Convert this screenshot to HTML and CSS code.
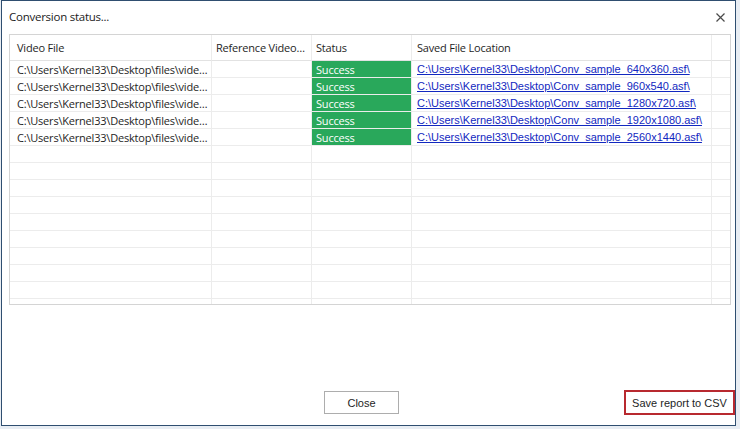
FILE: index.html
```html
<!DOCTYPE html>
<html lang="en">

<head>
    <meta charset="UTF-8">
    <title>Conversion status...</title>
    <link rel="stylesheet" href="styles.css">
</head>

<body>

    <div id="dialog">
        <div id="title-bar">
            <span id="title">Conversion status...</span>
            <span id="close-x">
                <svg width="9" height="9" viewBox="0 0 9 9">
                    <path d="M0.5 0.5 L8.5 8.5 M8.5 0.5 L0.5 8.5" stroke="#4a4a4a" stroke-width="1.2" fill="none" />
                </svg>
            </span>
        </div>

        <div id="grid">
            <div class="row header">
                <div class="cell c1">Video File</div>
                <div class="cell c2">Reference Video…</div>
                <div class="cell c3">Status</div>
                <div class="cell c4">Saved File Location</div>
                <div class="cell c5"></div>
            </div>
            <div class="row">
                <div class="cell c1">C:\Users\Kernel33\Desktop\files\vide…</div>
                <div class="cell c2"></div>
                <div class="cell c3 success">Success</div>
                <div class="cell c4"><a href="#">C:\Users\Kernel33\Desktop\Conv_sample_640x360.asf\</a></div>
                <div class="cell c5"></div>
            </div>
            <div class="row">
                <div class="cell c1">C:\Users\Kernel33\Desktop\files\vide…</div>
                <div class="cell c2"></div>
                <div class="cell c3 success">Success</div>
                <div class="cell c4"><a href="#">C:\Users\Kernel33\Desktop\Conv_sample_960x540.asf\</a></div>
                <div class="cell c5"></div>
            </div>
            <div class="row">
                <div class="cell c1">C:\Users\Kernel33\Desktop\files\vide…</div>
                <div class="cell c2"></div>
                <div class="cell c3 success">Success</div>
                <div class="cell c4"><a href="#">C:\Users\Kernel33\Desktop\Conv_sample_1280x720.asf\</a></div>
                <div class="cell c5"></div>
            </div>
            <div class="row">
                <div class="cell c1">C:\Users\Kernel33\Desktop\files\vide…</div>
                <div class="cell c2"></div>
                <div class="cell c3 success">Success</div>
                <div class="cell c4"><a href="#">C:\Users\Kernel33\Desktop\Conv_sample_1920x1080.asf\</a></div>
                <div class="cell c5"></div>
            </div>
            <div class="row">
                <div class="cell c1">C:\Users\Kernel33\Desktop\files\vide…</div>
                <div class="cell c2"></div>
                <div class="cell c3 success">Success</div>
                <div class="cell c4"><a href="#">C:\Users\Kernel33\Desktop\Conv_sample_2560x1440.asf\</a></div>
                <div class="cell c5"></div>
            </div>
            <div class="row"><div class="cell c1"></div><div class="cell c2"></div><div class="cell c3"></div><div class="cell c4"></div><div class="cell c5"></div></div>
            <div class="row"><div class="cell c1"></div><div class="cell c2"></div><div class="cell c3"></div><div class="cell c4"></div><div class="cell c5"></div></div>
            <div class="row"><div class="cell c1"></div><div class="cell c2"></div><div class="cell c3"></div><div class="cell c4"></div><div class="cell c5"></div></div>
            <div class="row"><div class="cell c1"></div><div class="cell c2"></div><div class="cell c3"></div><div class="cell c4"></div><div class="cell c5"></div></div>
            <div class="row"><div class="cell c1"></div><div class="cell c2"></div><div class="cell c3"></div><div class="cell c4"></div><div class="cell c5"></div></div>
            <div class="row"><div class="cell c1"></div><div class="cell c2"></div><div class="cell c3"></div><div class="cell c4"></div><div class="cell c5"></div></div>
            <div class="row"><div class="cell c1"></div><div class="cell c2"></div><div class="cell c3"></div><div class="cell c4"></div><div class="cell c5"></div></div>
            <div class="row"><div class="cell c1"></div><div class="cell c2"></div><div class="cell c3"></div><div class="cell c4"></div><div class="cell c5"></div></div>
            <div class="row"><div class="cell c1"></div><div class="cell c2"></div><div class="cell c3"></div><div class="cell c4"></div><div class="cell c5"></div></div>
            <div class="row"><div class="cell c1"></div><div class="cell c2"></div><div class="cell c3"></div><div class="cell c4"></div><div class="cell c5"></div></div>
        </div>

        <div id="spacer"></div>

        <div id="footer">
            <button id="close" class="dlg-button">Close</button>
            <button id="save-csv" class="dlg-button">Save report to CSV</button>
        </div>
    </div>

</body>

</html>
```

FILE: styles.css
```css
body {
    margin: 0;
    padding: 0;
    background: #e8edf3;
    font-family: 'Open Sans', 'Noto Sans', sans-serif;
    font-size: 11px;
    letter-spacing: -0.2px;
    color: #1e1e1e;
}

#dialog {
    width: 735px;
    height: 426px;
    margin-left: 1px;
    box-sizing: border-box;
    border: 1px solid #2f4e70;
    background: #ffffff;
    display: flex;
    flex-direction: column;
    overflow: hidden;
}

#title-bar {
    height: 33px;
    flex: none;
    display: flex;
    align-items: center;
    padding-left: 7px;
    padding-right: 10px;
    padding-bottom: 3px;
    box-sizing: border-box;
}

#title {
    font-size: 11.5px;
    letter-spacing: -0.25px;
    color: #222;
}

#close-x {
    margin-left: auto;
    display: flex;
    margin-top: 2px;
}

#grid {
    margin-left: 7px;
    width: 722px;
    height: 271px;
    flex: none;
    box-sizing: border-box;
    border: 1px solid #d4d4d4;
    overflow: hidden;
}

.row {
    display: flex;
    height: 17px;
}

.row.header {
    height: 26px;
}

.cell {
    box-sizing: border-box;
    height: 100%;
    border-right: 1px solid #ececec;
    border-bottom: 1px solid #ececec;
    padding-left: 4px;
    display: flex;
    align-items: center;
    white-space: nowrap;
    overflow: hidden;
}

.header .cell {
    border-bottom-color: #e2e2e2;
    padding-bottom: 1px;
}

.c1 {
    width: 202px;
    padding-left: 7px;
}

.c2 {
    width: 100px;
}

.c3 {
    width: 100px;
}

.c4 {
    width: 300px;
    padding-left: 5px;
}

.c5 {
    width: 18px;
    border-right: none;
}

.success {
    background: #29a85b;
    color: #ffffff;
}

.c4 a {
    font-family: 'Liberation Sans', Arial, sans-serif;
    font-size: 11px;
    letter-spacing: 0;
    color: #1228c0;
    text-decoration: underline;
}

#spacer {
    flex: 1;
}

#footer {
    flex: none;
    display: flex;
    align-items: center;
    padding-bottom: 10px;
}

.dlg-button {
    font-family: 'Liberation Sans', Arial, sans-serif;
    font-size: 11px;
    letter-spacing: 0;
    color: #1e1e1e;
    background: #ffffff;
    cursor: pointer;
    padding: 0;
}

#close {
    width: 75px;
    height: 23px;
    margin-left: 322px;
    border: 1px solid #adadad;
}

#save-csv {
    width: 111px;
    height: 25px;
    margin-left: auto;
    border: 2px solid #b8292f;
}
```
